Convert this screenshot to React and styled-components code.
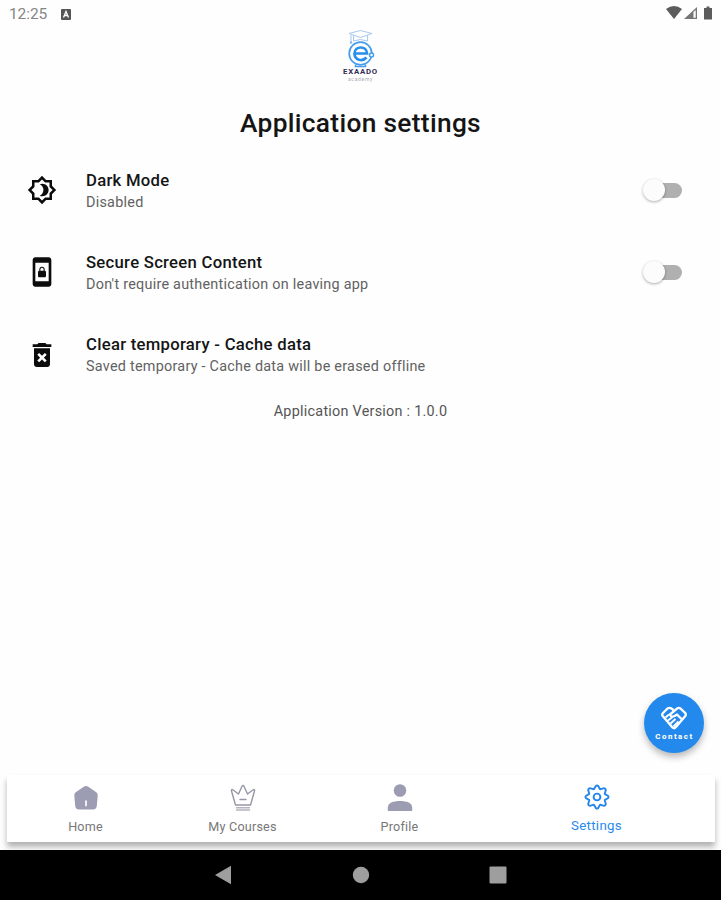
import styled, { createGlobalStyle } from "styled-components";
import {
  MdOutlineBrightness4,
  MdScreenLockPortrait,
  MdDeleteForever,
} from "react-icons/md";

const GlobalStyle = createGlobalStyle`
  * {
    box-sizing: border-box;
  }

  body {
    margin: 0;
    background: #fefefe;
    font-family: Roboto, "Liberation Sans", sans-serif;
  }
`;

const Screen = styled.div`
  position: relative;
  display: flex;
  flex-direction: column;
  width: 721px;
  height: 900px;
  overflow: hidden;
  background: #fefefe;
`;

const StatusBar = styled.header`
  display: flex;
  align-items: center;
  height: 28px;
  padding: 0 7px 0 9px;
  color: #858585;
  font-size: 15.5px;
`;

const Time = styled.span`
  width: 52px;
  letter-spacing: -0.1px;
`;

const StatusIcons = styled.div`
  display: flex;
  align-items: center;
  margin-left: auto;
  margin-top: -2px;
`;

const LogoBox = styled.div`
  display: flex;
  flex-direction: column;
  align-items: center;
  height: 56px;
  padding-top: 1px;
`;

const LogoName = styled.div`
  margin-top: -2px;
  color: #302c50;
  font-size: 7.8px;
  font-weight: 700;
  line-height: 9px;
  letter-spacing: 0.8px;
`;

const LogoTag = styled.div`
  color: #a9a9b4;
  font-size: 5px;
  line-height: 6px;
  letter-spacing: 0.7px;
`;

const Title = styled.h1`
  margin: 22px 0 8px;
  color: #151515;
  font-size: 26.3px;
  font-weight: 500;
  line-height: 35px;
  text-align: center;
  letter-spacing: 0.32px;
`;

const Row = styled.div`
  display: flex;
  align-items: center;
  height: 82.3px;
  padding: 0 39px 0 26px;
`;

const RowIcon = styled.div`
  display: flex;
  align-items: center;
  justify-content: center;
  width: 32px;
  margin-right: 28px;
  color: #0c0c0c;
`;

const RowText = styled.div`
  flex: 1;
  padding-top: 2px;
`;

const RowTitle = styled.div`
  color: #151515;
  font-size: 16.7px;
  font-weight: 500;
  line-height: 22px;
  letter-spacing: 0.27px;
`;

const RowSub = styled.div`
  color: #626262;
  font-size: 14.4px;
  line-height: 21px;
  letter-spacing: 0.25px;
`;

const Track = styled.div`
  display: flex;
  align-items: center;
  width: 35px;
  height: 15px;
  border-radius: 8px;
  background: #b0b0b0;
`;

const Thumb = styled.div`
  width: 22px;
  height: 22px;
  margin-left: -4px;
  border-radius: 50%;
  background: #fcfcfc;
  box-shadow: 0 1px 3px rgba(0, 0, 0, 0.32);
`;

const Version = styled.div`
  margin-top: 6px;
  color: #555;
  font-size: 14.4px;
  line-height: 20px;
  text-align: center;
  letter-spacing: 0.25px;
`;

const ContactButton = styled.button`
  position: absolute;
  right: 17px;
  bottom: 147px;
  display: flex;
  flex-direction: column;
  align-items: center;
  width: 60px;
  height: 60px;
  padding: 12px 0 0;
  border: 0;
  border-radius: 50%;
  background: #2389ec;
  box-shadow: 0 4px 7px rgba(0, 0, 0, 0.28);
  color: #fff;
  font-family: inherit;
`;

const ContactLabel = styled.span`
  margin-right: -1px;
  font-size: 7.9px;
  font-weight: 800;
  line-height: 9px;
  letter-spacing: 1.5px;
`;

const Tabs = styled.nav`
  display: flex;
  height: 67px;
  margin: auto 6px 8px 7px;
  background: #fff;
  box-shadow: 0 5px 6px rgba(0, 0, 0, 0.3);
`;

const Tab = styled.div`
  display: flex;
  flex: ${(props) => (props.$active ? "1" : "0 0 157px")};
  flex-direction: column;
  align-items: center;
  padding-top: ${(props) => (props.$active ? "8px" : "9px")};
  color: ${(props) => (props.$active ? "#2889ed" : "#777")};
  font-size: ${(props) => (props.$active ? "13.3px" : "12.6px")};
  line-height: 16px;
  letter-spacing: ${(props) => (props.$active ? "0.3px" : "0.2px")};
`;

const TabIcon = styled.div`
  height: 28px;
  margin-bottom: 7px;
`;

const SystemBar = styled.footer`
  display: flex;
  align-items: center;
  justify-content: center;
  gap: 119.5px;
  height: 50px;
  background: #000;
`;

function Logo() {
  return (
    <LogoBox>
      <svg width="40" height="40" viewBox="0 0 40 40" fill="none">
        <g stroke="#a9c9ea" strokeWidth="1">
          <path d="M8 4.500 19.500 1.500l11.500 3-11.500 4z" />
          <path d="M12.500 6.500v5.500q7-3 14 0V6.500M10 6v7" />
        </g>
        <circle cx="10" cy="13.500" r="1.200" fill="#86b9ec" />
        <circle cx="19.500" cy="24.500" r="11.300" stroke="#459ced" strokeWidth="1.700" />
        <circle
          cx="30.500"
          cy="26"
          r="2"
          fill="#fefefe"
          stroke="#459ced"
          strokeWidth="1.500"
        />
        <path
          d="M13.500 24.500h12.500c0-8-12.500-8-12.500 0 0 7 8 8.500 12 4"
          stroke="#288eeb"
          strokeWidth="2.700"
        />
        <path d="M14.500 35.500v2h10v-2" stroke="#459ced" strokeWidth="1.500" />
      </svg>
      <LogoName>EXAADO</LogoName>
      <LogoTag>academy</LogoTag>
    </LogoBox>
  );
}

function Switch() {
  return (
    <Track>
      <Thumb />
    </Track>
  );
}

function SettingRow(props) {
  return (
    <Row>
      <RowIcon>{props.icon}</RowIcon>
      <RowText>
        <RowTitle>{props.title}</RowTitle>
        <RowSub>{props.sub}</RowSub>
      </RowText>
      {props.toggle && <Switch />}
    </Row>
  );
}

function HomeIcon() {
  return (
    <svg width="28" height="28" viewBox="0 0 28 28">
      <path
        d="M11.700 2.700q2.300-1.500 4.600 0l8 5.600q1.700 1.300 1.400 3.500L24.800 22q-.5 3.500-4 3.500H7.200q-3.500 0-4-3.500L2.300 11.800Q2 9.600 3.700 8.300z"
        fill="#9c9db3"
      />
      <path d="M14 17v4.500" stroke="#fff" strokeWidth="1.700" strokeLinecap="round" />
    </svg>
  );
}

function CrownIcon() {
  return (
    <svg width="28" height="28" viewBox="0 0 28 28" fill="none" stroke="#9697a6" strokeWidth="1.400" strokeLinejoin="round" strokeLinecap="round">
      <path d="m6.500 21-4-14q-.5-2 1.300-1.200L9.500 10l3.400-7.500q1.100-2 2.200 0L18.500 10l5.700-4.200q1.800-.8 1.300 1.200l-4 14zM11 15.500h6" />
      <path d="M7.500 23.800h13M7.500 26h13" stroke="#b4b5bf" />
    </svg>
  );
}

function ProfileIcon() {
  return (
    <svg width="28" height="28" viewBox="0 0 28 28" fill="#9c9db3">
      <circle cx="14" cy="6.500" r="6.300" />
      <path d="M1.800 27v-3.500C1.800 19 7 17 14 17s12.200 2 12.200 6.500V27z" />
    </svg>
  );
}

function GearIcon() {
  return (
    <svg width="28" height="28" viewBox="0 0 28 28" fill="none" stroke="#2385eb" strokeWidth="1.900" strokeLinejoin="round">
      <path d="M13 2.800q1-.8 2 0l2.100 3.500 4-1.100q1.500.1 1.700 1.700l-1.100 4 3.500 2.100q.8 1 0 2l-3.500 2.100 1.100 4q-.2 1.600-1.700 1.700l-4-1.100-2.100 3.500q-1 .8-2 0l-2.100-3.500-4 1.100q-1.500-.1-1.700-1.700l1.100-4L2.800 15q-.8-1 0-2l3.500-2.100-1.100-4q.2-1.600 1.700-1.700l4 1.100z" />
      <circle cx="14" cy="14" r="3.400" />
    </svg>
  );
}

function HandshakeIcon() {
  return (
    <svg width="28" height="27" viewBox="0 0 28 27" fill="none" stroke="#fff" strokeWidth="2.300" strokeLinejoin="round">
      <path d="M13.500 5 11 3.300q-1.800-1-3.500.2L3 8q-1.500 1.500-.3 3l9.800 11.500q1.500 1.500 3 0l9.800-11.500q1.200-1.600-.2-3.100L20.500 3.500q-1.500-1.200-3.200-.2L10 9.500q1 3.500 5 1.300l2-1.300 4.500 4.500" />
      <path d="m5.500 12.500 3.500-3M8 15.500l4.500-3.500M10.500 18.500l5-4.500M13.500 21.500l5-5" strokeWidth="1.900" />
    </svg>
  );
}

const tabs = [
  { name: "Home", icon: <HomeIcon /> },
  { name: "My Courses", icon: <CrownIcon /> },
  { name: "Profile", icon: <ProfileIcon /> },
  { name: "Settings", icon: <GearIcon />, active: true },
];

function App() {
  return (
    <>
      <GlobalStyle />
      <Screen>
        <StatusBar>
          <Time>12:25</Time>
          <svg width="10" height="11" viewBox="0 0 10 11">
            <rect width="10" height="11" rx="1" fill="#555" />
            <path d="m2.500 8.500 2.500-6 2.500 6M3.500 6.500h3" stroke="#fff" strokeWidth="1.300" fill="none" />
          </svg>
          <StatusIcons>
            <svg width="48" height="16" viewBox="0 0 48 16" fill="#5c5c5c">
              <path d="M0 4q8-6 16 0L8 14z" />
              <path d="M18 14 31 2v12z" fill="#777" />
              <path d="M27.500 7 29.700 5v7.800h-2.200z" fill="#fff" />
              <path d="M38 3h2.500V1.500h3V3H46v11.500h-8z" />
            </svg>
          </StatusIcons>
        </StatusBar>
        <Logo />
        <Title>Application settings</Title>
        <SettingRow
          icon={<MdOutlineBrightness4 size={30} />}
          title="Dark Mode"
          sub="Disabled"
          toggle
        />
        <SettingRow
          icon={<MdScreenLockPortrait size={32} />}
          title="Secure Screen Content"
          sub="Don't require authentication on leaving app"
          toggle
        />
        <SettingRow
          icon={<MdDeleteForever size={32} />}
          title="Clear temporary - Cache data"
          sub="Saved temporary - Cache data will be erased offline"
        />
        <Version>Application Version : 1.0.0</Version>
        <Tabs>
          {tabs.map((tab) => (
            <Tab key={tab.name} $active={tab.active}>
              <TabIcon>{tab.icon}</TabIcon>
              {tab.name}
            </Tab>
          ))}
        </Tabs>
        <SystemBar>
          <svg width="18" height="20" viewBox="0 0 18 20">
            <path d="M1 10 17 .8v18.400z" fill="#9e9e9e" />
          </svg>
          <svg width="18" height="18" viewBox="0 0 18 18">
            <circle cx="9" cy="9" r="8.200" fill="#9e9e9e" />
          </svg>
          <svg width="18" height="18" viewBox="0 0 18 18">
            <rect x=".5" y=".5" width="17" height="17" rx="1" fill="#9e9e9e" />
          </svg>
        </SystemBar>
        <ContactButton>
          <HandshakeIcon />
          <ContactLabel>Contact</ContactLabel>
        </ContactButton>
      </Screen>
    </>
  );
}

export default App;
